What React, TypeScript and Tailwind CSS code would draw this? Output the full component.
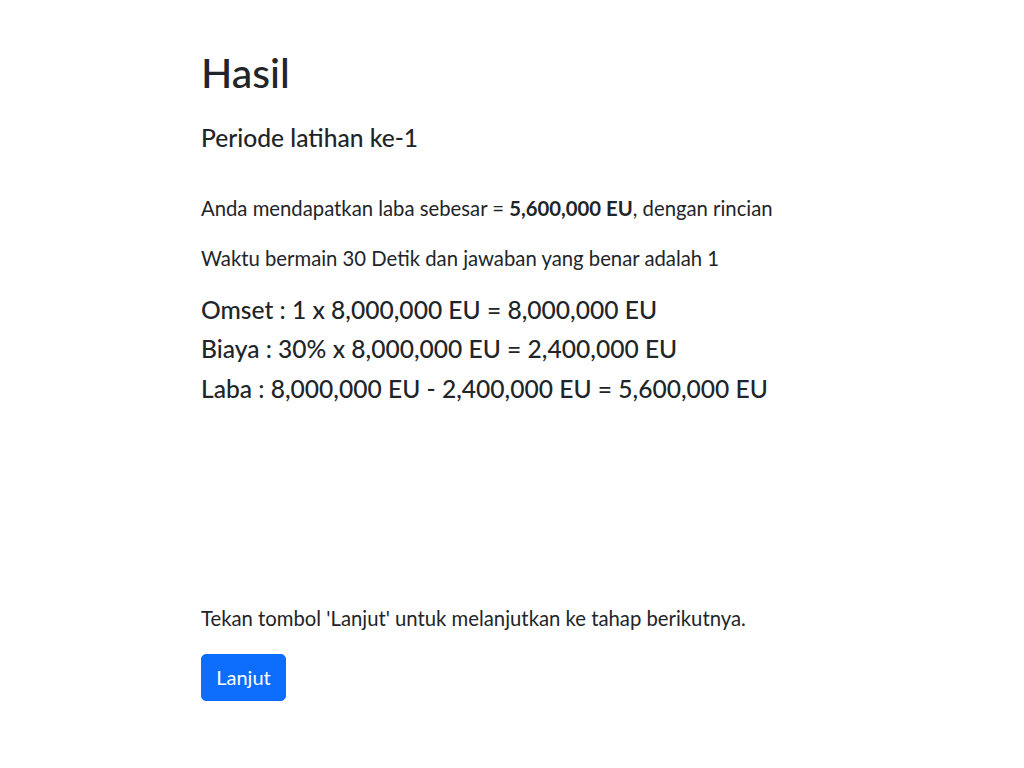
export default function App() {
  return (
    <div
      className="min-h-[768px] bg-white text-[#212529] pl-[201px] pt-[48px]"
      style={{ fontFamily: '"Lato", "Noto Sans", sans-serif' }}
    >
      <h1 className="text-[41px] leading-[1.2] font-medium m-0">Hasil</h1>
      <h5 className="text-[24.6px] leading-[1.2] font-medium mt-[26px]">Periode latihan ke-1</h5>
      <p className="text-[20.3px] leading-[1.5] mt-[40px]">
        Anda mendapatkan laba sebesar = <b className="font-bold">5,600,000 EU</b>, dengan rincian
      </p>
      <p className="text-[20.3px] leading-[1.5] mt-[20px]">
        Waktu bermain 30 Detik dan jawaban yang benar adalah 1
      </p>
      <h5 className="text-[24.6px] leading-[1.2] font-medium mt-[21px]">
        Omset : 1 x 8,000,000 EU = 8,000,000 EU
      </h5>
      <h5 className="text-[24.6px] leading-[1.2] font-medium mt-[10px]">
        Biaya : 30% x 8,000,000 EU = 2,400,000 EU
      </h5>
      <h5 className="text-[24.6px] leading-[1.2] font-medium mt-[10px]">
        Laba : 8,000,000 EU - 2,400,000 EU = 5,600,000 EU
      </h5>
      <p className="text-[20.3px] leading-[1.5] mt-[200px]">
        Tekan tombol 'Lanjut' untuk melanjutkan ke tahap berikutnya.
      </p>
      <button className="mt-[20px] h-[47px] w-[85px] rounded-[5px] bg-[#0d6efd] text-white text-[20px] border border-[#0d6efd]">
        Lanjut
      </button>
    </div>
  );
}
